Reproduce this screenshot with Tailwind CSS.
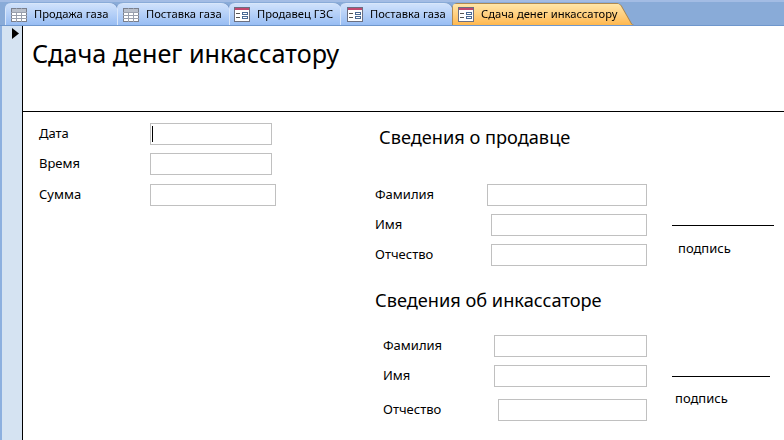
<!DOCTYPE html>
<html lang="ru">
<head>
  <meta charset="UTF-8">
  <title>Сдача денег инкассатору</title>
  <script src="https://cdn.jsdelivr.net/npm/@tailwindcss/browser@4"></script>
</head>
<body class="w-[784px] h-[440px] overflow-hidden bg-white text-black font-['Noto_Sans',sans-serif]">
  <!-- Tabs -->
  <div class="h-[26px] flex pl-[5px] pt-[1px] bg-[#89abd8] border-t-[2px] border-[#a3bce4] border-b-[1px] border-b-[#6f97cc] box-border overflow-hidden">
    <div class="-mr-[8px] drop-shadow-[1px_0_0_#6f8fc0]">
      <div class="w-[120px] h-[22px] flex items-center pl-[5px] text-[11.2px] border-l border-t border-[#d8e6fa] bg-gradient-to-b from-[#cfe1fb] to-[#98bdf3] [clip-path:path('M0_22V6Q0_0_6_0H104Q110_0_112_5L117_19Q118_22_120_22Z')]">
        <svg class="mr-[7px] shrink-0" width="16" height="14" viewBox="0 0 16 14"><rect x="0.5" y="0.5" width="15" height="13" fill="#fff" stroke="#7a7f8c"/><path d="M0 4.5H16M0 7.5H16M0 10.5H16M5.5 0V14M10.5 0V14" stroke="#9aa0ad"/><rect x="1" y="1" width="14" height="3" fill="#b9bfca"/></svg>
        <span>Продажа газа</span>
      </div>
    </div>
    <div class="-mr-[8px] drop-shadow-[1px_0_0_#6f8fc0]">
      <div class="w-[120px] h-[22px] flex items-center pl-[5px] text-[11.2px] border-l border-t border-[#d8e6fa] bg-gradient-to-b from-[#cfe1fb] to-[#98bdf3] [clip-path:path('M0_22V6Q0_0_6_0H104Q110_0_112_5L117_19Q118_22_120_22Z')]">
        <svg class="mr-[7px] shrink-0" width="16" height="14" viewBox="0 0 16 14"><rect x="0.5" y="0.5" width="15" height="13" fill="#fff" stroke="#7a7f8c"/><path d="M0 4.5H16M0 7.5H16M0 10.5H16M5.5 0V14M10.5 0V14" stroke="#9aa0ad"/><rect x="1" y="1" width="14" height="3" fill="#b9bfca"/></svg>
        <span>Поставка газа</span>
      </div>
    </div>
    <div class="-mr-[9px] drop-shadow-[1px_0_0_#6f8fc0]">
      <div class="w-[120px] h-[22px] flex items-center pl-[4px] text-[11.2px] border-l border-t border-[#d8e6fa] bg-gradient-to-b from-[#cfe1fb] to-[#98bdf3] [clip-path:path('M0_22V6Q0_0_6_0H104Q110_0_112_5L117_19Q118_22_120_22Z')]">
        <svg class="mr-[7px] shrink-0" width="16" height="15" viewBox="0 0 16 15"><rect x="0.5" y="0.5" width="15" height="14" fill="#fff" stroke="#6b6f80"/><rect x="1" y="1" width="14" height="2" fill="#c2486e"/><path d="M2 6.5H6M2 10.5H6" stroke="#555"/><rect x="8.5" y="5.5" width="5" height="2" fill="#fff" stroke="#4b6a94"/><rect x="8.5" y="9.5" width="5" height="2" fill="#fff" stroke="#4b6a94"/></svg>
        <span>Продавец ГЗС</span>
      </div>
    </div>
    <div class="-mr-[8px] drop-shadow-[1px_0_0_#6f8fc0]">
      <div class="w-[120px] h-[22px] flex items-center pl-[6px] text-[11.2px] border-l border-t border-[#d8e6fa] bg-gradient-to-b from-[#cfe1fb] to-[#98bdf3] [clip-path:path('M0_22V6Q0_0_6_0H104Q110_0_112_5L117_19Q118_22_120_22Z')]">
        <svg class="mr-[7px] shrink-0" width="16" height="15" viewBox="0 0 16 15"><rect x="0.5" y="0.5" width="15" height="14" fill="#fff" stroke="#6b6f80"/><rect x="1" y="1" width="14" height="2" fill="#c2486e"/><path d="M2 6.5H6M2 10.5H6" stroke="#555"/><rect x="8.5" y="5.5" width="5" height="2" fill="#fff" stroke="#4b6a94"/><rect x="8.5" y="9.5" width="5" height="2" fill="#fff" stroke="#4b6a94"/></svg>
        <span>Поставка газа</span>
      </div>
    </div>
    <div class="drop-shadow-[1px_0_0_#a8834a]">
      <div class="w-[181px] h-[22px] flex items-center pl-[5px] text-[11.2px] border-l border-t border-[#b08a50] bg-gradient-to-b from-[#ffe6a8] to-[#ffb84e] [clip-path:path('M0_22V6Q0_0_6_0H162Q168_0_170_5L178_19Q179_22_181_22Z')]">
        <svg class="mr-[7px] shrink-0" width="16" height="15" viewBox="0 0 16 15"><rect x="0.5" y="0.5" width="15" height="14" fill="#fff" stroke="#6b6f80"/><rect x="1" y="1" width="14" height="2" fill="#c2486e"/><path d="M2 6.5H6M2 10.5H6" stroke="#555"/><rect x="8.5" y="5.5" width="5" height="2" fill="#fff" stroke="#4b6a94"/><rect x="8.5" y="9.5" width="5" height="2" fill="#fff" stroke="#4b6a94"/></svg>
        <span>Сдача денег инкассатору</span>
      </div>
    </div>
  </div>

  <div class="flex h-[414px]">
    <!-- Record selector -->
    <div class="w-[23px] shrink-0 bg-[#d5e3f2] border-l-[2px] border-l-[#8db0df] border-r-[1px] border-r-black pl-[10px] pt-[2px] box-border">
      <svg width="7" height="11" viewBox="0 0 7 11"><path d="M0 0L7 5.5L0 11Z" fill="#000"/></svg>
    </div>

    <!-- Form -->
    <div class="flex-1">
      <div class="h-[86px] border-b border-black box-border pl-[9px] pt-[10px]">
        <h1 class="text-[25.2px] leading-[34px]">Сдача денег инкассатору</h1>
      </div>

      <div class="flex">
        <div class="w-[337px] shrink-0 pl-[16px] pt-[11px] text-[13px]">
          <div class="flex items-center h-[22px]">
            <span class="w-[111px]">Дата</span>
            <div class="w-[122px] h-[22px] border border-[#c0c0c0] pl-[1px] pt-[2px]"><div class="w-[1px] h-[16px] bg-black"></div></div>
          </div>
          <div class="flex items-center h-[22px] mt-[8px]">
            <span class="w-[111px]">Время</span>
            <div class="w-[122px] h-[22px] border border-[#c0c0c0]"></div>
          </div>
          <div class="flex items-center h-[22px] mt-[9px]">
            <span class="w-[111px]">Сумма</span>
            <div class="w-[126px] h-[22px] border border-[#c0c0c0]"></div>
          </div>
        </div>

        <div class="flex-1 text-[13px]">
          <h2 class="text-[18.2px] leading-[24px] ml-[19px] mt-[13px]">Сведения о продавце</h2>
          <div class="flex mt-[35px]">
            <div class="w-[287px] shrink-0">
              <div class="flex items-center h-[22px]">
                <span class="ml-[15px] w-[112px]">Фамилия</span>
                <div class="w-[160px] h-[22px] border border-[#c0c0c0]"></div>
              </div>
              <div class="flex items-center h-[22px] mt-[8px]">
                <span class="ml-[15px] w-[116px]">Имя</span>
                <div class="w-[156px] h-[22px] border border-[#c0c0c0]"></div>
              </div>
              <div class="flex items-center h-[22px] mt-[8px]">
                <span class="ml-[15px] w-[116px]">Отчество</span>
                <div class="w-[156px] h-[22px] border border-[#c0c0c0]"></div>
              </div>
            </div>
            <div class="ml-[25px] pt-[41px]">
              <div class="w-[102px] border-t border-black"></div>
              <div class="ml-[6px] mt-[13px] leading-[18px]">подпись</div>
            </div>
          </div>
          <h2 class="text-[18.2px] leading-[24px] ml-[15px] mt-[22px]">Сведения об инкассаторе</h2>
          <div class="flex mt-[23px]">
            <div class="w-[287px] shrink-0">
              <div class="flex items-center h-[22px]">
                <span class="ml-[23px] w-[111px]">Фамилия</span>
                <div class="w-[153px] h-[22px] border border-[#c0c0c0]"></div>
              </div>
              <div class="flex items-center h-[22px] mt-[8px]">
                <span class="ml-[23px] w-[111px]">Имя</span>
                <div class="w-[153px] h-[22px] border border-[#c0c0c0]"></div>
              </div>
              <div class="flex items-center h-[22px] mt-[12px]">
                <span class="ml-[23px] w-[115px]">Отчество</span>
                <div class="w-[149px] h-[22px] border border-[#c0c0c0]"></div>
              </div>
            </div>
            <div class="ml-[25px] pt-[41px]">
              <div class="w-[98px] border-t border-black"></div>
              <div class="ml-[3px] mt-[12px] leading-[18px]">подпись</div>
            </div>
          </div>
        </div>
      </div>
    </div>
  </div>
</body>
</html>
